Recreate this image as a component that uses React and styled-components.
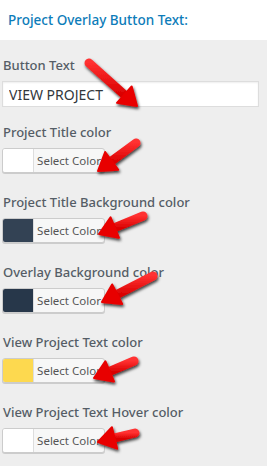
import React from 'react'
import styled, { createGlobalStyle } from 'styled-components'

const GlobalStyle = createGlobalStyle`
  html, body {
    margin: 0;
    padding: 0;
    background: #eeeeee;
  }
  body {
    font-family: "Noto Sans", "Open Sans", sans-serif;
  }
`

const fields = [
  { label: 'Project Title color', swatch: '#ffffff' },
  { label: 'Project Title Background color', swatch: '#334254' },
  { label: 'Overlay Background color', swatch: '#27374a' },
  { label: 'View Project Text color', swatch: '#fdd94f' },
  { label: 'View Project Text Hover color', swatch: '#ffffff' },
]

// tail -> tip, in page coordinates
const arrows = [
  [[89, 63], [137, 106]],
  [[136, 143], [98, 171]],
  [[143, 216], [99, 234]],
  [[153, 276], [102, 302]],
  [[134, 361], [94, 378]],
  [[135, 433], [98, 442]],
]

function Arrow({ from, to }) {
  const dx = to[0] - from[0]
  const dy = to[1] - from[1]
  const len = Math.hypot(dx, dy)
  const ux = dx / len
  const uy = dy / len
  const nx = -uy
  const ny = ux
  const headLen = 17
  const headW = 11
  const bx = to[0] - ux * headLen
  const by = to[1] - uy * headLen
  const pts = [
    [to[0], to[1]],
    [bx + nx * headW, by + ny * headW],
    [bx - nx * headW, by - ny * headW],
  ]
    .map((p) => p.join(','))
    .join(' ')
  return (
    <g filter="url(#arrowShadow)">
      <line
        x1={from[0]}
        y1={from[1]}
        x2={bx + ux * 2}
        y2={by + uy * 2}
        stroke="url(#arrowFill)"
        strokeWidth="9"
        strokeLinecap="round"
      />
      <polygon points={pts} fill="#e80000" strokeLinejoin="round" stroke="#e80000" strokeWidth="2" />
    </g>
  )
}

function App() {
  return (
    <>
      <GlobalStyle />
      <Page>
        <Header>
          <Title>Project Overlay Button Text:</Title>
        </Header>
        <Content>
          <Field $first>
            <Label>Button Text</Label>
            <TextInput defaultValue="VIEW PROJECT" />
          </Field>
          {fields.map((f) => (
            <Field key={f.label}>
              <Label>{f.label}</Label>
              <ColorButton>
                <Swatch $color={f.swatch} />
                <ButtonText>Select Color</ButtonText>
              </ColorButton>
            </Field>
          ))}
        </Content>
        <Overlay width="267" height="466" viewBox="0 0 267 466">
          <defs>
            <filter id="arrowShadow" x="-30%" y="-30%" width="160%" height="160%">
              <feDropShadow dx="1" dy="2" stdDeviation="1.6" floodColor="#000" floodOpacity="0.75" />
            </filter>
            <linearGradient id="arrowFill" x1="0" y1="0" x2="0" y2="1">
              <stop offset="0" stopColor="#ff3030" />
              <stop offset="1" stopColor="#d80000" />
            </linearGradient>
          </defs>
          {arrows.map((a, i) => (
            <Arrow key={i} from={a[0]} to={a[1]} />
          ))}
        </Overlay>
      </Page>
    </>
  )
}

const Page = styled.div`
  position: relative;
  width: 267px;
  height: 466px;
  overflow: hidden;
  background: #eeeeee;
`

const Header = styled.div`
  height: 40px;
  background: #ffffff;
  display: flex;
  align-items: center;
  padding-left: 8px;
`

const Title = styled.h2`
  margin: 0;
  font-size: 13.5px;
  font-weight: 500;
  color: #0d7cb9;
`

const Content = styled.div`
  display: flex;
  flex-direction: column;
  padding: 15px 8px 0 2px;
`

const Field = styled.div`
  display: flex;
  flex-direction: column;
  margin-bottom: ${(p) => (p.$first ? '15px' : '18px')};
`

const Label = styled.label`
  height: 20px;
  line-height: 20px;
  padding-left: 1px;
  margin-bottom: 6px;
  font-size: 13px;
  font-weight: 500;
  color: #555d66;
  white-space: nowrap;
`

const TextInput = styled.input`
  box-sizing: border-box;
  height: 26px;
  width: 100%;
  margin: 0;
  padding: 0 6px;
  border: 1px solid #dddddd;
  background: #ffffff;
  box-shadow: inset 0 1px 2px rgba(0, 0, 0, 0.07);
  font-family: "Noto Sans", "Open Sans", sans-serif;
  font-size: 14px;
  color: #32373c;
  outline: none;
`

const ColorButton = styled.div`
  box-sizing: border-box;
  display: flex;
  width: 103px;
  height: 25px;
  margin-bottom: 1px;
  border: 1px solid #cccccc;
  border-radius: 3px;
  background: #f7f7f7;
  box-shadow: 0 1px 0 #cccccc;
  overflow: hidden;
`

const Swatch = styled.span`
  width: 30px;
  background: ${(p) => p.$color};
  border-right: 1px solid #dddddd;
`

const ButtonText = styled.span`
  flex: 1;
  display: flex;
  align-items: center;
  justify-content: center;
  font-size: 11.5px;
  color: #555555;
`

const Overlay = styled.svg`
  position: absolute;
  left: 0;
  top: 0;
  pointer-events: none;
`

export default App
